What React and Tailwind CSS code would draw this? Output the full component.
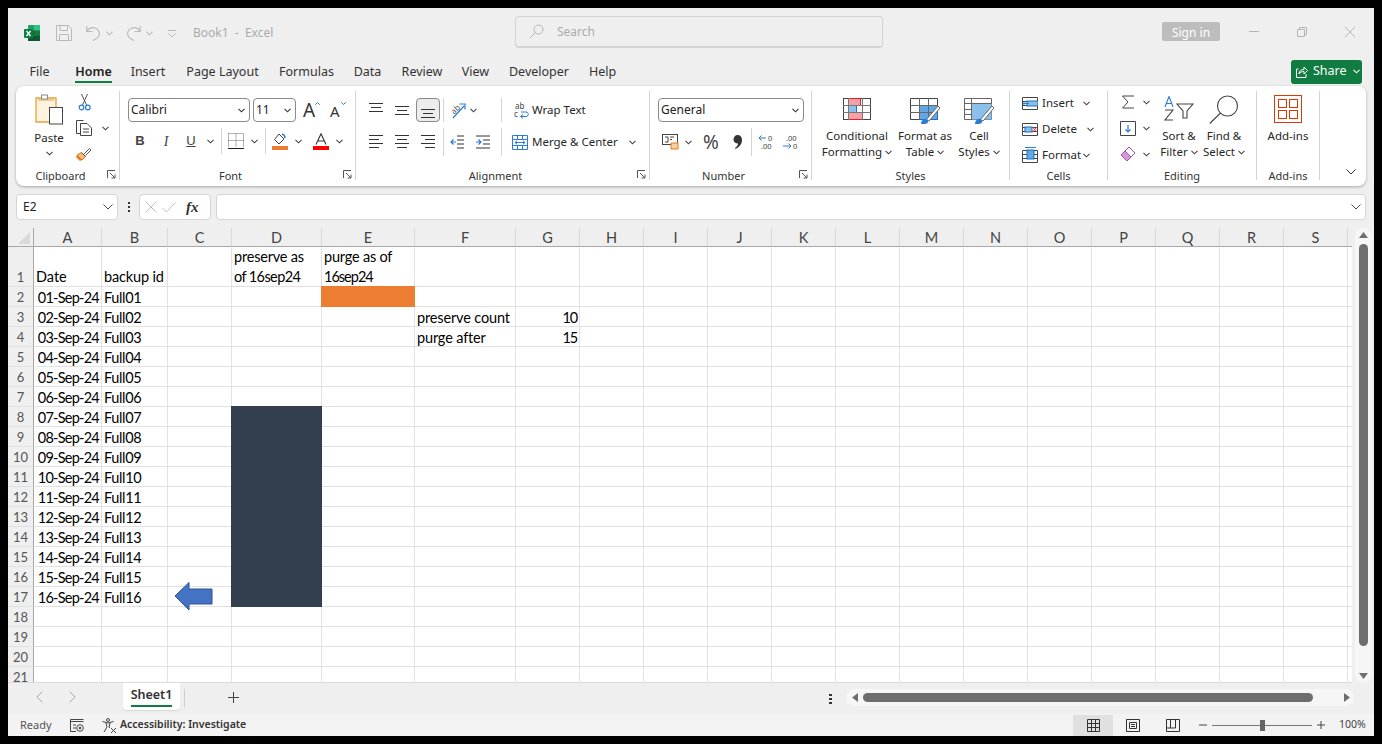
import React from "react";

const Chev = ({ className = "", color = "#444" }) => (
  <svg width="7" height="5" viewBox="0 0 7 5" className={"shrink-0 " + className}>
    <path d="M.5 .8 3.5 3.8 6.5 .8" fill="none" stroke={color} strokeWidth="1.1" />
  </svg>
);

const Launcher = () => (
  <svg width="9" height="9" viewBox="0 0 9 9" className="absolute right-[3px] bottom-[1px]">
    <path d="M.5 8V.5H8M3 3 8 8M8 4.5V8H4.5M8 8" fill="none" stroke="#555" strokeWidth="1" />
  </svg>
);

const Group = ({ className = "", label, launcher, children }) => (
  <div className={"relative shrink-0 h-[89px] border-r border-[#d4d4d4] " + className}>
    {children}
    <div className={"absolute left-0 right-0 bottom-[-3px] text-center text-[11px] leading-[14px] text-[#333] " + (launcher ? "pr-[14px]" : "")}>{label}</div>
    {launcher && <Launcher />}
  </div>
);

const Sep = ({ className = "" }) => <div className={"w-px self-stretch bg-[#d4d4d4] shrink-0 " + className} />;

const Lines = ({ ys, xs }) => (
  <svg width="14" height="16" viewBox="0 0 14 16" className="shrink-0">
    {ys.map((y, i) => (
      <path key={i} d={`M${xs[i][0]} ${y + 0.5}H${xs[i][1]}`} stroke="#333" strokeWidth="1" />
    ))}
  </svg>
);

const Select = ({ className = "", text }) => (
  <div className={"h-[24px] border border-[#8a8a8a] rounded-[4px] bg-white flex items-center justify-between pl-[2px] pr-[4px] text-[12px] text-[#222] shrink-0 " + className}>
    <span>{text}</span>
    <Chev color="#333" />
  </div>
);

const Big = ({ className = "", icon, lines, iconClass = "" }) => (
  <div className={"flex flex-col items-center shrink-0 pt-[4px] text-[11.5px] leading-[16px] text-[#262626] " + className}>
    <div className={"h-[33px] flex items-start justify-center " + iconClass}>{icon}</div>
    {lines.map((l, i) => (
      <div key={i} className="flex items-center whitespace-nowrap">
        {l.replace("^", "")}
        {l.endsWith("^") && <Chev className="ml-[3px]" />}
      </div>
    ))}
  </div>
);

const TableIcon = ({ children, w = 30, h = 26 }) => (
  <svg width={w} height={h} viewBox={`0 0 ${w} ${h}`}>{children}</svg>
);

const tabs = [
  ["File", "w-[19px] ml-[22px]"],
  ["Home", "w-[37px] ml-[26px]"],
  ["Insert", "w-[32px] ml-[20px]"],
  ["Page Layout", "w-[71px] ml-[23px]"],
  ["Formulas", "w-[53px] ml-[22px]"],
  ["Data", "w-[27px] ml-[21px]"],
  ["Review", "w-[40px] ml-[21px]"],
  ["View", "w-[27px] ml-[20px]"],
  ["Developer", "w-[60px] ml-[20px]"],
  ["Help", "w-[27px] ml-[20px]"],
];

const cols = ["A", "B", "C", "D", "E", "F", "G", "H", "I", "J", "K", "L", "M", "N", "O", "P", "Q", "R", "S"];
const days = Array.from({ length: 16 }, (_, i) => String(i + 1).padStart(2, "0"));

function cellContent(r, c) {
  if (r === 1) {
    if (c === "A") return <div className="absolute left-[2px] bottom-[-1px]">Date</div>;
    if (c === "B") return <div className="absolute left-[2px] bottom-[-1px] whitespace-nowrap tracking-[-0.15px]">backup id</div>;
    if (c === "D")
      return (
        <div className="absolute left-[2px] top-0 whitespace-nowrap">
          <div className="tracking-[-0.2px]">preserve as</div>
          <div className="tracking-[-0.6px]">of 16sep24</div>
        </div>
      );
    if (c === "E")
      return (
        <div className="absolute left-[2px] top-0 whitespace-nowrap">
          <div className="tracking-[-0.2px]">purge as of</div>
          <div className="tracking-[-1px]">16sep24</div>
        </div>
      );
  }
  if (r >= 2 && r <= 17) {
    if (c === "A") return <div className="absolute right-[2px] top-[1px] whitespace-nowrap tracking-[-0.75px]">{days[r - 2]}-Sep-24</div>;
    if (c === "B") return <div className="absolute left-[2px] top-[1px] tracking-[-0.35px]">Full{String(r - 1).padStart(2, "0")}</div>;
  }
  if (r === 3 && c === "F") return <div className="absolute left-[2px] top-[1px] whitespace-nowrap tracking-[-0.15px]">preserve count</div>;
  if (r === 4 && c === "F") return <div className="absolute left-[2px] top-[1px] whitespace-nowrap tracking-[-0.15px]">purge after</div>;
  if (r === 3 && c === "G") return <div className="absolute right-[2px] top-[1px] tracking-[-1.2px]">10</div>;
  if (r === 4 && c === "G") return <div className="absolute right-[2px] top-[1px] tracking-[-1.2px]">15</div>;
  if (r === 2 && c === "E") return <div className="absolute -inset-px bg-[#ed7d31]" />;
  if (r >= 8 && r <= 17 && c === "D") return <div className="absolute -inset-px bg-[#333f4f]" />;
  if (r === 17 && c === "C")
    return (
      <svg width="40" height="30" viewBox="0 0 40 30" className="absolute left-[6px] top-[-6px] z-10">
        <path d="M1 15 15 1.5V8H38V23H15V29Z" fill="#4472c4" stroke="#2f528f" strokeWidth="1" />
      </svg>
    );
  return null;
}

export default function App() {
  const rows = Array.from({ length: 21 }, (_, i) => i + 1);
  return (
    <div className="w-[1382px] h-[744px] bg-black p-2 overflow-hidden font-['Noto_Sans',sans-serif]">
      <div className="w-[1366px] h-[728px] bg-[#efefef] flex flex-col overflow-hidden">
        {/* Title bar */}
        <div className="h-[50px] flex items-center shrink-0">
          <div className="w-[507px] flex items-center shrink-0 pl-[16px]">
            <svg width="16" height="16" viewBox="0 0 16 16" className="shrink-0">
              <rect x="4" y="0" width="12" height="16" rx="1" fill="#21a366" />
              <rect x="10" y="0" width="6" height="5.5" fill="#33c481" />
              <rect x="10" y="5.5" width="6" height="5" fill="#107c41" />
              <rect x="4" y="5.5" width="6" height="5" fill="#185c37" />
              <rect x="4" y="10.5" width="12" height="5.5" fill="#0b5a30" />
              <rect x="0" y="4" width="9" height="9" rx="1" fill="#107c41" />
              <path d="M2.5 6 6.5 11M6.5 6 2.5 11" stroke="#fff" strokeWidth="1.3" />
            </svg>
            <svg width="16" height="16" viewBox="0 0 16 16" className="ml-[16px] shrink-0">
              <path d="M.5.5H12.5L15.5 3.5V15.5H.5ZM4 .5V5.5H11.5V.5M3.5 15.5V9.5H12.5V15.5" fill="none" stroke="#b9b9b9" />
            </svg>
            <svg width="15" height="16" viewBox="0 0 15 16" className="ml-[14px] shrink-0">
              <path d="M.8 1V6.5H6.3M1 6.3C3 3 6 2 9 3 13 4.5 14.5 8.5 12.5 11.5 11 14 8.5 15 7 15.5" fill="none" stroke="#b9b9b9" strokeWidth="1.1" />
            </svg>
            <Chev className="ml-[5px]" color="#b9b9b9" />
            <svg width="15" height="16" viewBox="0 0 15 16" className="ml-[13px] shrink-0">
              <path d="M14.2 1V6.5H8.7M14 6.3C12 3 9 2 6 3 2 4.5.5 8.5 2.5 11.5 4 14 6.5 15 8 15.5" fill="none" stroke="#b9b9b9" strokeWidth="1.1" />
            </svg>
            <Chev className="ml-[5px]" color="#b9b9b9" />
            <svg width="8" height="9" viewBox="0 0 8 9" className="ml-[15px] shrink-0">
              <path d="M0 1.5H8M.5 4.5 4 8 7.5 4.5" fill="none" stroke="#b9b9b9" />
            </svg>
            <div className="ml-[17px] text-[12px] leading-[16px] text-[#ababab] whitespace-pre">Book1  -  Excel</div>
          </div>
          <div className="w-[368px] h-[32px] -mt-[2px] border border-[#d4d4d4] border-b-2 rounded-[4px] flex items-center pl-[13px] shrink-0">
            <svg width="15" height="15" viewBox="0 0 15 15" className="shrink-0">
              <circle cx="9.5" cy="5.5" r="4.5" fill="none" stroke="#b5b5b5" />
              <path d="M6 9 .8 14.2" stroke="#b5b5b5" />
            </svg>
            <span className="ml-[13px] text-[12px] leading-[18px] pt-[1px] text-[#ababab]">Search</span>
          </div>
          <div className="ml-[279px] w-[58px] h-[19px] -mt-[3px] bg-[#bdbdbd] rounded-[2px] text-white text-[12px] leading-[21px] text-center shrink-0">Sign in</div>
          <svg width="10" height="10" viewBox="0 0 10 10" className="ml-[29px] -mt-[2px] shrink-0"><path d="M0 4.5H10" stroke="#b5b5b5" /></svg>
          <svg width="10" height="10" viewBox="0 0 10 10" className="ml-[38px] -mt-[2px] shrink-0"><path d="M.5 2.5H7.5V9.5H.5ZM2.5 2.5V.5H9.5V7.5H7.5" fill="none" stroke="#b5b5b5" /></svg>
          <svg width="10" height="10" viewBox="0 0 10 10" className="ml-[38px] -mt-[2px] shrink-0"><path d="M0 0 10 10M10 0 0 10" stroke="#b5b5b5" /></svg>
        </div>

        {/* Tabs */}
        <div className="h-[28px] flex items-center shrink-0 text-[12.5px] text-[#333]">
          {tabs.map(([t, c]) => (
            <div key={t} className={"relative whitespace-nowrap text-center shrink-0 " + c + (t === "Home" ? " font-semibold text-[#222]" : "")}>
              <span className="inline-block -mx-2">{t}</span>
              {t === "Home" && <div className="absolute left-0 right-0 -bottom-[2px] h-[2px] bg-[#107c41]" />}
            </div>
          ))}
          <div className="ml-[675px] w-[71px] h-[24px] -mt-[1px] bg-[#107c41] rounded-[3px] flex items-center pl-[5px] text-white shrink-0">
            <svg width="12" height="12" viewBox="0 0 12 12" className="shrink-0">
              <path d="M2.5 3H.5V11.5H10V8M3 8C3 5 5 3.5 8 3.5V1L11.5 4.5 8 8V5.5C6 5.5 4 6 3 8Z" fill="none" stroke="#fff" />
            </svg>
            <span className="ml-[5px]">Share</span>
            <Chev className="ml-[6px]" color="#fff" />
          </div>
        </div>

        {/* Ribbon */}
        <div className="mx-2 h-[100px] bg-white rounded-[8px] shadow-[0_1px_3px_rgba(0,0,0,0.3)] pt-[5px] flex shrink-0">
          {/* Clipboard */}
          <Group className="w-[104px] flex" label="Clipboard" launcher>
            <div className="ml-[14px] w-[38px] flex flex-col items-center text-[11.5px] leading-[16px] text-[#262626]">
              <svg width="28" height="31" viewBox="0 0 28 31" className="mt-[3px]">
                <path d="M1 4H7V2.5C7 1 12 1 12 2.5V4H21V28H1Z" fill="#fdf3df" stroke="#e8a33a" strokeWidth="1.3" />
                <path d="M3 6H19" stroke="#e8a33a" />
                <rect x="6.5" y="1" width="6" height="4" fill="#fff" stroke="#8a8a8a" />
                <rect x="14.5" y="13.5" width="13" height="16.5" fill="#fff" stroke="#444" />
              </svg>
              <div className="mt-[5px]">Paste</div>
              <Chev className="mt-[5px]" />
            </div>
            <div className="ml-[8px] flex flex-col pt-[3px]">
              <svg width="14" height="17" viewBox="0 0 14 17" className="ml-[2px]">
                <path d="M3.5 0 8.5 11M9.5 0 4.5 11" stroke="#555" fill="none" />
                <circle cx="3.5" cy="13.5" r="2.3" fill="none" stroke="#2b7cd3" strokeWidth="1.2" />
                <circle cx="9.8" cy="13.5" r="2.3" fill="none" stroke="#2b7cd3" strokeWidth="1.2" />
              </svg>
              <div className="flex items-center mt-[9px]">
                <svg width="16" height="16" viewBox="0 0 16 16">
                  <path d="M4.5 13.5H.5V.5H7.5M4.5 3.5H11L15.5 8V15.5H4.5ZM7 9H13M7 12H13" fill="none" stroke="#444" />
                </svg>
                <Chev className="ml-[10px]" />
              </div>
              <svg width="16" height="16" viewBox="0 0 16 16" className="mt-[10px]">
                <path d="M1 9 6 14 9.5 10.5 5.5 6.5Z" fill="#f5b971" stroke="#d97a1f" />
                <path d="M5.5 6.5 9.5 10.5M8 8 13.5 2.5 15 4 9.5 9.5" fill="none" stroke="#555" />
                <path d="M1 9 6 14 4 15 0 11Z" fill="#e87d20" />
              </svg>
            </div>
          </Group>

          {/* Font */}
          <Group className="w-[236px]" label="Font" launcher>
            <div className="flex pt-[7px] pl-[8px]">
              <Select className="w-[122px]" text="Calibri" />
              <Select className="w-[43px] ml-[3px]" text="11" />
              <div className="ml-[7px] w-[15px] h-[24px] relative text-[19px] leading-[24px] text-[#333]">
                A
                <svg width="5" height="3" viewBox="0 0 5 3" className="absolute top-[4px] right-[-2px]"><path d="M.3 2.7 2.5.5 4.7 2.7" fill="none" stroke="#2b7cd3" /></svg>
              </div>
              <div className="ml-[12px] w-[15px] h-[24px] relative text-[15px] leading-[27px] text-[#333]">
                A
                <svg width="5" height="3" viewBox="0 0 5 3" className="absolute top-[4px] right-[-1px]"><path d="M.3.3 2.5 2.5 4.7.3" fill="none" stroke="#2b7cd3" /></svg>
              </div>
            </div>
            <div className="flex items-center h-[26px] mt-[6px] pl-[14px] text-[#444]">
              <div className="w-[12px] text-center text-[13px] font-bold font-['Liberation_Sans',sans-serif]">B</div>
              <div className="w-[12px] ml-[14px] text-center text-[14px] italic font-['Liberation_Serif',serif]">I</div>
              <div className="w-[12px] ml-[13px] text-center text-[13px] underline font-['Liberation_Sans',sans-serif]">U</div>
              <Chev className="ml-[10px]" />
              <Sep className="ml-[7px]" />
              <svg width="16" height="16" viewBox="0 0 16 16" className="ml-[6px] shrink-0">
                <path d="M.5.5H15.5V14M.5.5V14M8 .5V14M.5 7.5H15.5" fill="none" stroke="#666" strokeDasharray="1 1" />
                <path d="M0 15.5H16" stroke="#222" />
              </svg>
              <Chev className="ml-[7px]" />
              <Sep className="ml-[7px]" />
              <svg width="16" height="17" viewBox="0 0 16 17" className="ml-[6px] shrink-0">
                <path d="M7 1 12 6 7 11 2.5 6.5Z" fill="#fff" stroke="#444" />
                <path d="M10 1C12 1.5 13 3 13 5" fill="none" stroke="#2b7cd3" strokeWidth="1.5" />
                <rect x="0" y="13" width="16" height="4" fill="#ed7d31" />
              </svg>
              <Chev className="ml-[7px]" />
              <svg width="16" height="17" viewBox="0 0 16 17" className="ml-[11px] shrink-0">
                <path d="M3 11.5 8 .8 13 11.5M4.8 8H11.2" fill="none" stroke="#333" strokeWidth="1.1" />
                <rect x="0" y="13" width="16" height="4" fill="#ff0000" />
              </svg>
              <Chev className="ml-[7px]" />
            </div>
          </Group>

          {/* Alignment */}
          <Group className="w-[294px]" label="Alignment" launcher>
            <div className="flex items-center h-[24px] mt-[7px] pl-[13px]">
              <Lines ys={[1, 5, 9]} xs={[[0, 14], [2, 12], [0, 14]]} />
              <div className="ml-[12px]"><Lines ys={[4, 8, 12]} xs={[[0, 14], [2, 12], [0, 14]]} /></div>
              <div className="ml-[7px] w-[24px] h-[24px] bg-[#ececec] border border-[#8a8a8a] rounded-[4px] flex items-center justify-center shrink-0">
                <div className="pt-[1px]"><Lines ys={[6, 10, 14]} xs={[[0, 14], [2, 12], [0, 14]]} /></div>
              </div>
              <Sep className="ml-[3px]" />
              <svg width="17" height="17" viewBox="0 0 17 17" className="ml-[5px] shrink-0 overflow-visible">
                <text x="1" y="11" fontSize="8" fill="#555" transform="rotate(-45 5 7)">ab</text>
                <path d="M4 16 15 4M10.5 2H16V7.5" fill="none" stroke="#2b7cd3" strokeWidth="1.2" />
              </svg>
              <Chev className="ml-[4px]" />
              <Sep className="ml-[24px]" />
              <svg width="15" height="17" viewBox="0 0 15 17" className="ml-[12px] shrink-0 overflow-visible">
                <text x="1" y="7" fontSize="8" fill="#444">ab</text>
                <text x="0" y="15" fontSize="8" fill="#444">c</text>
                <path d="M7 10H12C15 10 15 14.5 12 14.5H7M9 12.5 6.5 14.5 9 16.5" fill="none" stroke="#2b7cd3" />
              </svg>
              <span className="ml-[3px] text-[11.5px] text-[#262626] whitespace-nowrap">Wrap Text</span>
            </div>
            <div className="flex items-center h-[28px] mt-[6px] pl-[13px]">
              <Lines ys={[1, 5, 9, 13]} xs={[[0, 14], [0, 10], [0, 14], [0, 10]]} />
              <div className="ml-[12px]"><Lines ys={[1, 5, 9, 13]} xs={[[0, 14], [2, 12], [0, 14], [2, 12]]} /></div>
              <div className="ml-[12px]"><Lines ys={[1, 5, 9, 13]} xs={[[0, 14], [4, 14], [0, 14], [4, 14]]} /></div>
              <Sep className="ml-[8px]" />
              <svg width="14" height="14" viewBox="0 0 14 14" className="ml-[6px] shrink-0">
                <path d="M7 1H14M7 5H14M7 9H14M7 13H14" stroke="#333" />
                <path d="M6 7H.8M3.5 4.5 1 7 3.5 9.5" fill="none" stroke="#2b7cd3" strokeWidth="1.2" />
              </svg>
              <svg width="14" height="14" viewBox="0 0 14 14" className="ml-[12px] shrink-0">
                <path d="M0 1H14M7 5H14M7 9H14M0 13H14" stroke="#333" />
                <path d="M0 7H5.2M2.5 4.5 5 7 2.5 9.5" fill="none" stroke="#2b7cd3" strokeWidth="1.2" />
              </svg>
              <Sep className="ml-[11px]" />
              <svg width="16" height="15" viewBox="0 0 16 15" className="ml-[10px] shrink-0">
                <path d="M.5.5H15.5V14.5H.5ZM.5 4.5H15.5M.5 10.5H15.5M5.5.5V4.5M10.5.5V4.5M5.5 10.5V14.5M10.5 10.5V14.5" fill="none" stroke="#2b7cd3" />
                <path d="M3 7.5H13M5 5.8 3 7.5 5 9.2M11 5.8 13 7.5 11 9.2" fill="none" stroke="#2b7cd3" />
              </svg>
              <span className="ml-[4px] w-[86px] text-[11.5px] text-[#262626] whitespace-nowrap">Merge &amp; Center</span>
              <Chev className="ml-[11px]" />
            </div>
          </Group>

          {/* Number */}
          <Group className="w-[162px]" label="Number" launcher>
            <div className="pt-[7px] pl-[8px]"><Select className="w-[146px]" text="General" /></div>
            <div className="flex items-center h-[28px] mt-[6px] pl-[12px]">
              <svg width="17" height="16" viewBox="0 0 17 16" className="shrink-0">
                <rect x=".5" y=".5" width="15" height="10" fill="#fff" stroke="#444" />
                <path d="M3 3H6V8H3M8 3H12M8 5.5H10" fill="none" stroke="#444" />
                <path d="M9 9H16V15H9Z" fill="#f8cfa0" stroke="#e07b20" />
              </svg>
              <Chev className="ml-[6px]" />
              <div className="ml-[11px] w-[16px] flex justify-center text-[19px] leading-[24px] text-[#444]">%</div>
              <svg width="9" height="14" viewBox="0 0 9 14" className="ml-[14px] shrink-0">
                <path d="M4.5 0C7.5 0 9 2 9 5 9 9 6 12.5 2.5 14L2 13C4 11.5 5 10 5 8.5 2.5 8.5 .5 7 .5 4.5 .5 2 2.5 0 4.5 0Z" fill="#333" />
              </svg>
              <Sep className="ml-[9px]" />
              <svg width="16" height="16" viewBox="0 0 16 16" className="ml-[6px] shrink-0 overflow-visible">
                <path d="M8 4H1M3.5 1.5 1 4 3.500 6.500" fill="none" stroke="#2b7cd3" />
                <text x="10" y="7" fontSize="7.5" fill="#444">0</text>
                <text x="3" y="15" fontSize="7.5" fill="#444">.00</text>
              </svg>
              <svg width="16" height="16" viewBox="0 0 16 16" className="ml-[9px] shrink-0 overflow-visible">
                <text x="3" y="7" fontSize="7.5" fill="#444">.00</text>
                <path d="M0 12H8M5.5 9.5 8 12 5.5 14.5" fill="none" stroke="#2b7cd3" />
                <text x="10" y="15" fontSize="7.5" fill="#444">0</text>
              </svg>
            </div>
          </Group>

          {/* Styles */}
          <Group className="w-[198px] flex" label="Styles">
            <Big className="w-[70px] ml-[10px]" iconClass="pt-[3px]" lines={["Conditional", "Formatting^"]} icon={
              <TableIcon w={28} h={22}>
                <rect x=".5" y=".5" width="27" height="21" fill="#fff" stroke="#444" />
                <rect x="5.5" y=".5" width="12" height="7" fill="#f7a0a6" stroke="#d9232e" />
                <rect x="5.5" y="14.5" width="14" height="7" fill="#f7a0a6" stroke="#d9232e" />
                <rect x="5.5" y="7.5" width="8" height="7" fill="#8cc0ec" stroke="#1d6fc0" />
                <path d="M5.5 0V22M19.5 0V22M0 7.5H28M0 14.5H28" stroke="#777" fill="none" />
              </TableIcon>
            } />
            <Big className="w-[60px] ml-[3px]" iconClass="pt-[3px]" lines={["Format as", "Table^"]} icon={
              <TableIcon>
                <path d="M.5.5H27.5V21.5H.5Z" fill="#fff" stroke="#444" />
                <rect x="9.5" y="7.5" width="18" height="14" fill="#63a8e6" stroke="#1d6fc0" />
                <path d="M9.5 0V22M18.5 0V22M0 7.5H28M0 14.5H28" stroke="#666" fill="none" />
                <path d="M16 22 28 8 30 10 19 23Z" fill="#fff" stroke="#666" />
                <path d="M11 26C11 22 14 20 17 21 19 23 18 26 15 26Z" fill="#2b7cd3" />
              </TableIcon>
            } />
            <Big className="w-[44px] ml-[2px]" iconClass="pt-[3px]" lines={["Cell", "Styles^"]} icon={
              <TableIcon>
                <path d="M.5.5H27.5V21.5H.5Z" fill="#fff" stroke="#666" />
                <rect x="7.5" y="5.5" width="20" height="16" fill="#8cc0ec" />
                <path d="M0 5.5H28M7.5 0V22M0 11.5H7M0 16.5H7" stroke="#666" fill="none" />
                <path d="M16 22 28 8 30 10 19 23Z" fill="#fff" stroke="#666" />
                <path d="M11 26C11 22 14 20 17 21 19 23 18 26 15 26Z" fill="#2b7cd3" />
              </TableIcon>
            } />
          </Group>

          {/* Cells */}
          <Group className="w-[98px]" label="Cells">
            <div className="text-[11.5px] text-[#262626] pl-[12px]">
              <div className="h-[26px] flex items-center -mt-[1px]">
                <svg width="16" height="13" viewBox="0 0 16 13" className="shrink-0">
                  <path d="M.5.5H15.5V12.5H.5ZM.5 4.5H15.5M.5 8.5H15.5" fill="none" stroke="#444" />
                  <rect x="5" y="4" width="11" height="5" fill="#8cc0ec" stroke="#1d6fc0" />
                  <path d="M7 6.5H1M3 4.5 1 6.5 3 8.5" fill="none" stroke="#2b7cd3" />
                </svg>
                <span className="ml-[4px] w-[40px]">Insert</span>
                <Chev className="ml-[1px]" />
              </div>
              <div className="h-[26px] flex items-center">
                <svg width="16" height="13" viewBox="0 0 16 13" className="shrink-0">
                  <path d="M.5.5H15.5V12.5H.5ZM.5 4.5H15.5M.5 8.5H15.5" fill="none" stroke="#444" />
                  <rect x="3" y="4" width="7" height="5" fill="#8cc0ec" stroke="#1d6fc0" />
                  <path d="M10.5 4 15 9M15 4 10.5 9" stroke="#e03c3c" />
                </svg>
                <span className="ml-[4px] w-[40px]">Delete</span>
                <Chev className="ml-[5px]" />
              </div>
              <div className="h-[26px] flex items-center">
                <svg width="16" height="16" viewBox="0 0 16 16" className="shrink-0">
                  <path d="M.5 3.5H15.5V15.5H.5ZM.5 7.5H15.5M.5 11.5H15.5" fill="none" stroke="#444" />
                  <rect x="5" y="3" width="7" height="9" fill="#63a8e6" stroke="#1d6fc0" />
                  <path d="M3 .5H14" stroke="#2b7cd3" />
                </svg>
                <span className="ml-[4px] w-[40px]">Format</span>
                <Chev className="ml-[1px]" />
              </div>
            </div>
          </Group>

          {/* Editing */}
          <Group className="w-[149px] flex" label="Editing">
            <div className="ml-[12px] flex flex-col shrink-0">
              <div className="h-[26px] -mt-[2px] flex items-center">
                <svg width="16" height="14" viewBox="0 0 16 14" className="shrink-0">
                  <path d="M14 1H2.5L8 7 2.5 13H14" fill="none" stroke="#444" />
                </svg>
                <Chev className="ml-[7px]" />
              </div>
              <div className="h-[26px] flex items-center">
                <svg width="16" height="15" viewBox="0 0 16 15" className="shrink-0">
                  <path d="M.5.5H15.5V14.5H.5Z" fill="none" stroke="#444" />
                  <path d="M8 4V11M5.5 8.5 8 11 10.5 8.5" fill="none" stroke="#2b7cd3" strokeWidth="1.2" />
                </svg>
                <Chev className="ml-[7px]" />
              </div>
              <div className="h-[26px] flex items-center">
                <svg width="16" height="16" viewBox="0 0 16 16" className="shrink-0">
                  <path d="M9 1 15 7 7 15 1 9Z" fill="#d59ad8" stroke="#a94fb0" />
                  <path d="M9 1 15 7 11 11 5 5Z" fill="#fff" stroke="#a94fb0" />
                </svg>
                <Chev className="ml-[7px]" />
              </div>
            </div>
            <Big className="w-[40px] ml-[9px]" lines={["Sort &", "Filter^"]} icon={
              <svg width="30" height="25" viewBox="0 0 30 25" className="mt-[1px]">
                <path d="M1 11 5 .5 9 11M2.5 7.5H7.5" fill="none" stroke="#2b7cd3" strokeWidth="1.1" />
                <path d="M1 14H9L1 24H9" fill="none" stroke="#444" strokeWidth="1.1" />
                <path d="M13 8H29L23 15V22H19V15Z" fill="none" stroke="#444" strokeWidth="1.1" />
              </svg>
            } />
            <Big className="w-[44px] ml-[3px]" lines={["Find &", "Select^"]} icon={
              <svg width="30" height="29" viewBox="0 0 30 29">
                <circle cx="18.5" cy="11" r="10" fill="#fff" stroke="#444" strokeWidth="1.1" />
                <path d="M11.5 18 .8 28.5" stroke="#444" strokeWidth="1.1" />
              </svg>
            } />
          </Group>

          {/* Add-ins */}
          <Group className="w-[63px]" label="Add-ins">
            <Big className="w-full" lines={["Add-ins"]} icon={
              <svg width="28" height="28" viewBox="0 0 28 28">
                <rect x=".5" y=".5" width="27" height="27" fill="none" stroke="#d83b01" />
                <rect x="4.5" y="4.5" width="8" height="8" fill="none" stroke="#d83b01" />
                <rect x="15.5" y="4.5" width="8" height="8" fill="none" stroke="#d83b01" />
                <rect x="4.5" y="15.5" width="8" height="8" fill="none" stroke="#d83b01" />
                <rect x="15.5" y="15.5" width="8" height="8" fill="none" stroke="#d83b01" />
              </svg>
            } />
          </Group>
          <div className="pl-[26px] pt-[78px]">
            <svg width="10" height="6" viewBox="0 0 10 6"><path d="M.5.5 5 5 9.5.5" fill="none" stroke="#333" /></svg>
          </div>
        </div>

        {/* Formula bar */}
        <div className="h-[26px] mt-[8px] mx-2 flex shrink-0">
          <div className="w-[102px] bg-white border border-[#d5d5d5] rounded-[4px] flex items-center justify-between pl-[6px] pr-[4px] text-[12px] text-[#222]">
            <span>E2</span>
            <svg width="10" height="6" viewBox="0 0 10 6"><path d="M.5.5 5 5 9.5.5" fill="none" stroke="#444" /></svg>
          </div>
          <div className="w-[21px] flex flex-col items-center justify-center gap-[2px]">
            <div className="w-[2px] h-[2px] bg-[#333]" /><div className="w-[2px] h-[2px] bg-[#333]" /><div className="w-[2px] h-[2px] bg-[#333]" />
          </div>
          <div className="w-[72px] bg-white border border-[#d5d5d5] rounded-[4px] flex items-center pl-[5px]">
            <svg width="12" height="12" viewBox="0 0 12 12" className="shrink-0"><path d="M.5.5 11.5 11.5M11.5.5.5 11.5" stroke="#c0c0c0" /></svg>
            <svg width="14" height="11" viewBox="0 0 14 11" className="ml-[5px] shrink-0"><path d="M.5 6 4.5 10 13.5.5" fill="none" stroke="#c0c0c0" /></svg>
            <span className="ml-[10px] text-[15px] leading-none italic font-bold text-[#333] font-['Liberation_Serif',serif]">fx</span>
          </div>
          <div className="w-[1150px] ml-[5px] bg-white border border-[#d5d5d5] rounded-[4px] flex items-center justify-end pr-[4px]">
            <svg width="10" height="6" viewBox="0 0 10 6"><path d="M.5.5 5 5 9.5.5" fill="none" stroke="#444" /></svg>
          </div>
        </div>

        {/* Sheet */}
        <div className="h-[455px] mt-[8px] flex shrink-0">
          <div className="w-[1344px] h-[455px] overflow-hidden bg-white border-b border-[#dadada]">
            <div className="grid grid-cols-[26px_68px_66px_64px_90px_93px_101px_repeat(13,64px)_4px] grid-rows-[19px_40px_repeat(20,20px)] font-['Lato',sans-serif] text-[14.5px] leading-[20px] text-black">
              <div className="relative bg-[#efefef] border-b border-r border-[#a8a8a8]">
                <svg width="12" height="12" viewBox="0 0 12 12" className="absolute left-[10px] top-[4px]"><path d="M12 0V12H0Z" fill="#d9d9d9" /></svg>
              </div>
              {cols.map((c) => (
                <div key={c} className="bg-[#efefef] border-b border-r border-b-[#a8a8a8] border-r-[#d9d9d9] text-center text-[#444]">{c}</div>
              ))}
              <div className="bg-[#efefef] border-b border-[#a8a8a8]" />
              {rows.map((r) => (
                <React.Fragment key={r}>
                  <div className="bg-[#efefef] border-r border-b border-r-[#a8a8a8] border-b-[#e1e1e1] flex items-end justify-center text-[13px] leading-[18px] text-[#555]">{r}</div>
                  {cols.map((c) => (
                    <div key={c} className="relative border-r border-b border-[#e1e1e1]">{cellContent(r, c)}</div>
                  ))}
                  <div className="border-b border-[#e1e1e1]" />
                </React.Fragment>
              ))}
            </div>
          </div>
          <div className="ml-[3px] w-[17px] h-[455px] bg-[#f6f6f6] rounded-full flex flex-col items-center pt-[4px] shrink-0">
            <svg width="9" height="6" viewBox="0 0 9 6" className="shrink-0"><path d="M4.5 0 9 6H0Z" fill="#6e6e6e" /></svg>
            <div className="w-[9px] h-[402px] mt-[6px] bg-[#6e6e6e] rounded-full shrink-0" />
            <svg width="9" height="6" viewBox="0 0 9 6" className="mt-[27px] shrink-0"><path d="M4.5 6 9 0H0Z" fill="#6e6e6e" /></svg>
          </div>
        </div>

        {/* Sheet tabs */}
        <div className="h-[31px] flex items-start shrink-0">
          <svg width="7" height="12" viewBox="0 0 7 12" className="ml-[28px] mt-[8px] shrink-0"><path d="M6.5.5 1 6 6.5 11.5" fill="none" stroke="#aaa" /></svg>
          <svg width="7" height="12" viewBox="0 0 7 12" className="ml-[26px] mt-[8px] shrink-0"><path d="M.5.5 6 6 .5 11.5" fill="none" stroke="#aaa" /></svg>
          <div className="ml-[47px] w-[57px] h-[27px] bg-white rounded-b-[4px] shadow-[0_1px_1px_rgba(0,0,0,0.1)] flex flex-col items-center shrink-0">
            <div className="text-[12.5px] leading-[18px] mt-[3px] font-semibold text-[#333] whitespace-nowrap">Sheet1</div>
            <div className="w-[41px] h-[2px] bg-[#107c41] mt-[1px]" />
          </div>
          <div className="ml-[4px] w-px h-[18px] mt-[6px] bg-[#cfcfcf] shrink-0" />
          <svg width="11" height="11" viewBox="0 0 11 11" className="ml-[43px] mt-[9px] shrink-0"><path d="M5.5 0V11M0 5.5H11" stroke="#444" /></svg>
          <div className="ml-[590px] mt-[11px] flex flex-col gap-[2px] shrink-0">
            <div className="w-[3px] h-[2px] bg-[#333]" /><div className="w-[3px] h-[2px] bg-[#333]" /><div className="w-[3px] h-[2px] bg-[#333]" />
          </div>
          <div className="ml-[14px] mt-[6px] w-[508px] h-[17px] bg-[#f6f6f6] rounded-full flex items-center shrink-0">
            <svg width="6" height="9" viewBox="0 0 6 9" className="ml-[6px] shrink-0"><path d="M0 4.5 6 0V9Z" fill="#6e6e6e" /></svg>
            <div className="ml-[5px] w-[450px] h-[9px] bg-[#6e6e6e] rounded-full shrink-0" />
            <svg width="6" height="9" viewBox="0 0 6 9" className="ml-[31px] shrink-0"><path d="M6 4.5 0 0V9Z" fill="#6e6e6e" /></svg>
          </div>
        </div>

        {/* Status bar */}
        <div className="h-[22px] bg-[#f3f3f3] flex items-center text-[11px] text-[#555] shrink-0">
          <span className="ml-[12px] w-[50px] shrink-0">Ready</span>
          <svg width="14" height="13" viewBox="0 0 14 13" className="shrink-0">
            <path d="M.5.5H13.5M.5 2.5H13.5M.5.5V12.5H6M3 6H6M3 9H6" fill="none" stroke="#444" />
            <circle cx="10" cy="9" r="3.3" fill="none" stroke="#444" /><circle cx="10" cy="9" r="1.2" fill="#444" />
          </svg>
          <svg width="15" height="15" viewBox="0 0 15 15" className="ml-[18px] shrink-0">
            <circle cx="6" cy="2" r="1.5" fill="none" stroke="#444" />
            <path d="M.5 3.5 6 5 11.5 3.5M4 5 5 9 2 14M8 5 7 9 8 10" fill="none" stroke="#444" />
            <path d="M9 10 14 15M14 10 9 15" stroke="#444" />
          </svg>
          <span className="ml-[3px] text-[10.5px] font-semibold text-[#333] whitespace-nowrap w-[127px] shrink-0">Accessibility: Investigate</span>
          <div className="ml-[826px] w-[40px] h-[21px] mt-px bg-[#e0e0e0] flex items-center justify-center shrink-0">
            <svg width="13" height="13" viewBox="0 0 13 13"><path d="M.5.5H12.5V12.5H.5ZM4.5.5V12.5M8.5.5V12.5M.5 4.5H12.5M.5 8.5H12.5" fill="none" stroke="#333" /></svg>
          </div>
          <svg width="14" height="13" viewBox="0 0 14 13" className="ml-[13px] shrink-0"><path d="M.5.5H13.5V12.5H.5ZM3.5 3.5H10.5V9.5H3.5ZM5 5.5H9M5 7.5H9" fill="none" stroke="#333" /></svg>
          <svg width="14" height="13" viewBox="0 0 14 13" className="ml-[26px] shrink-0"><path d="M.5.5H13.5V12.5H.5ZM.5 9H9.5V.5M4.5.5V9" fill="none" stroke="#333" /></svg>
          <svg width="8" height="2" viewBox="0 0 8 2" className="ml-[19px] shrink-0"><path d="M0 1H8" stroke="#444" /></svg>
          <div className="ml-[5px] w-[100px] h-px bg-[#777] relative shrink-0">
            <div className="absolute left-[48px] top-[-5px] w-[5px] h-[11px] bg-[#666]" />
          </div>
          <svg width="8" height="8" viewBox="0 0 8 8" className="ml-[5px] shrink-0"><path d="M4 0V8M0 4H8" stroke="#444" /></svg>
          <span className="ml-[14px] text-[10.5px] text-[#444] shrink-0">100%</span>
        </div>
      </div>
    </div>
  );
}
